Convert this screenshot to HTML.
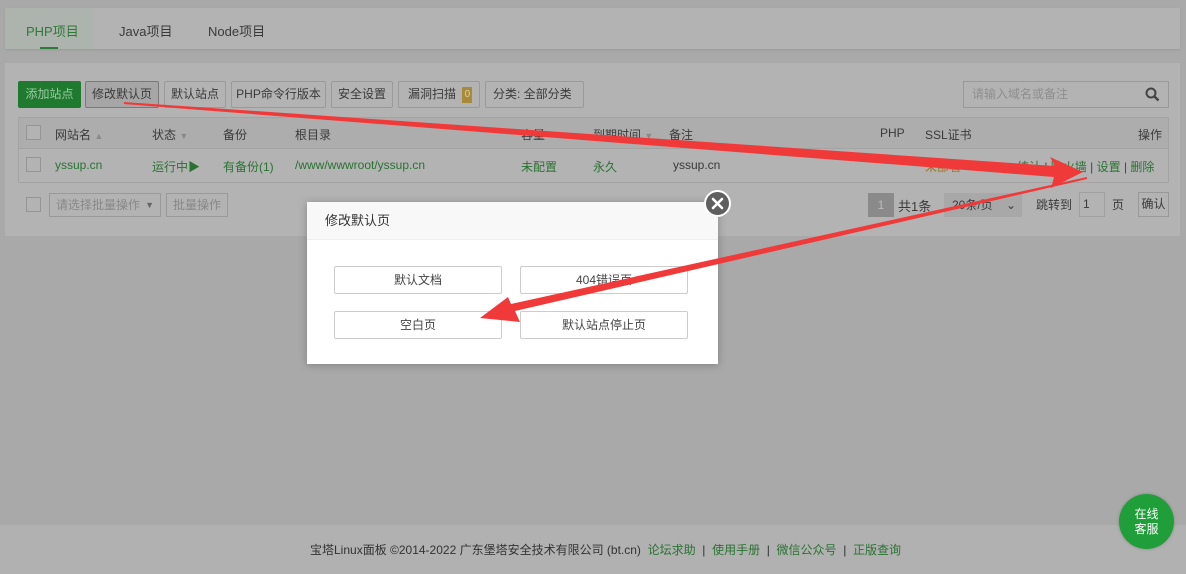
<!DOCTYPE html>
<html><head><meta charset="utf-8"><style>
*{margin:0;padding:0;box-sizing:border-box}
body{width:1186px;height:574px;background:#a9a9a9;font-family:"Liberation Sans","Noto Sans CJK SC",sans-serif;font-size:12px;color:#3a3a3a;position:relative;overflow:hidden}
.a{position:absolute}
.btn{position:absolute;top:81px;height:27px;border:1px solid #9a9a9a;background:#b3b3b3;line-height:25px;text-align:center;color:#3a3a3a;border-radius:2px}
.g{color:#2a7232}
.cb{position:absolute;width:15px;height:15px;border:1px solid #959595;background:#b3b3b3}
.db{position:absolute;width:168px;height:28px;border:1px solid #ccc;border-radius:2px;line-height:26px;text-align:center;color:#444;background:#fff}
</style></head><body>
<div class="a" style="left:5px;top:8px;width:1175px;height:41px;background:#b3b3b3;box-shadow:0 1px 2px #999"></div>
<div class="a" style="left:5px;top:8px;width:89px;height:41px;background:#adb3ad"></div>
<div class="a" style="left:26px;top:21px;font-size:13px;color:#2e7a38">PHP项目</div>
<div class="a" style="left:40px;top:47px;width:18px;height:2px;background:#2e7a38"></div>
<div class="a" style="left:119px;top:21px;font-size:13px">Java项目</div>
<div class="a" style="left:208px;top:21px;font-size:13px">Node项目</div>

<div class="a" style="left:5px;top:63px;width:1175px;height:173px;background:#b3b3b3"></div>
<div class="btn" style="left:18px;width:63px;background:#1f7a30;border-color:#1f7a30;color:#9cc9a2">添加站点</div>
<div class="btn" style="left:85px;width:74px;background:#a6a6a6;border-color:#7a7a7a">修改默认页</div>
<div class="btn" style="left:164px;width:62px">默认站点</div>
<div class="btn" style="left:231px;width:95px">PHP命令行版本</div>
<div class="btn" style="left:331px;width:62px">安全设置</div>
<div class="btn" style="left:398px;width:82px;text-align:left;padding-left:9px">漏洞扫描 <span style="display:inline-block;width:10px;height:16px;background:#a88a3a;color:#e0d0a0;font-size:10px;line-height:16px;text-align:center;vertical-align:middle;margin-left:3px">0</span></div>
<div class="btn" style="left:485px;width:99px;text-align:left;padding-left:7px">分类: 全部分类 <span style="font-size:9px">▼</span></div>
<div class="a" style="left:963px;top:81px;width:206px;height:27px;border:1px solid #999;background:#b3b3b3;color:#8e8e8e;line-height:25px;padding-left:8px">请输入域名或备注
<svg class="a" style="right:8px;top:5px" width="15" height="15" viewBox="0 0 15 15"><circle cx="6" cy="6" r="4.5" fill="none" stroke="#444" stroke-width="2"/><path d="M9.5 9.5L13.5 13.5" stroke="#444" stroke-width="2.4"/></svg></div>

<div class="a" style="left:18px;top:117px;width:1151px;height:66px;border:1px solid #a3a3a3"></div>
<div class="a" style="left:19px;top:118px;width:1149px;height:31px;background:#adadad;border-bottom:1px solid #a3a3a3"></div>
<div class="cb" style="left:26px;top:125px"></div>
<div class="cb" style="left:26px;top:157px"></div>
<div class="a" style="left:55px;top:126px">网站名 <span style="color:#8a8a8a;font-size:9px">▲</span></div>
<div class="a" style="left:152px;top:126px">状态 <span style="color:#8a8a8a;font-size:9px">▼</span></div>
<div class="a" style="left:223px;top:126px">备份</div>
<div class="a" style="left:295px;top:126px">根目录</div>
<div class="a" style="left:521px;top:126px">容量</div>
<div class="a" style="left:593px;top:126px">到期时间 <span style="color:#8a8a8a;font-size:9px">▼</span></div>
<div class="a" style="left:669px;top:126px">备注</div>
<div class="a" style="left:880px;top:126px">PHP</div>
<div class="a" style="left:925px;top:126px">SSL证书</div>
<div class="a" style="left:1138px;top:126px">操作</div>
<div class="a g" style="left:55px;top:158px">yssup.cn</div>
<div class="a g" style="left:152px;top:158px">运行中▶</div>
<div class="a g" style="left:223px;top:158px">有备份(1)</div>
<div class="a g" style="left:295px;top:158px">/www/wwwroot/yssup.cn</div>
<div class="a g" style="left:521px;top:158px">未配置</div>
<div class="a g" style="left:593px;top:158px">永久</div>
<div class="a" style="left:673px;top:158px">yssup.cn</div>
<div class="a" style="left:925px;top:158px;color:#a07020">未部署</div>
<div class="a g" style="left:1017px;top:158px">统计 <span style="color:#444">|</span> 防火墙 <span style="color:#444">|</span> 设置 <span style="color:#444">|</span> 删除</div>

<div class="cb" style="left:26px;top:197px"></div>
<div class="a" style="left:49px;top:193px;width:112px;height:24px;border:1px solid #999;color:#888;line-height:22px;padding-left:6px">请选择批量操作 <span style="position:absolute;right:6px;font-size:9px;color:#666">▼</span></div>
<div class="a" style="left:166px;top:193px;width:62px;height:24px;border:1px solid #999;color:#888;line-height:22px;text-align:center">批量操作</div>
<div class="a" style="left:868px;top:193px;width:26px;height:24px;background:#8a8a8a;color:#bbb;line-height:24px;text-align:center">1</div>
<div class="a" style="left:898px;top:196px;font-size:13px">共1条</div>
<div class="a" style="left:944px;top:193px;width:78px;height:24px;background:#a8a8a8;line-height:24px;padding-left:8px">20条/页 <span style="position:absolute;right:6px">⌄</span></div>
<div class="a" style="left:1036px;top:196px">跳转到</div>
<div class="a" style="left:1079px;top:192px;width:26px;height:25px;border:1px solid #a0a0a0;line-height:23px;padding-left:3px">1</div>
<div class="a" style="left:1112px;top:196px">页</div>
<div class="a" style="left:1138px;top:192px;width:31px;height:25px;border:1px solid #999;line-height:23px;text-align:center">确认</div>

<div class="a" style="left:0;top:525px;width:1186px;height:49px;background:#b1b1b1"></div>
<div class="a" style="left:310px;top:541px;color:#333">宝塔Linux面板 ©2014-2022 广东堡塔安全技术有限公司 (bt.cn) &nbsp;<span class="g">论坛求助</span> &nbsp;| &nbsp;<span class="g">使用手册</span> &nbsp;| &nbsp;<span class="g">微信公众号</span> &nbsp;| &nbsp;<span class="g">正版查询</span></div>
<div class="a" style="left:1119px;top:494px;width:55px;height:55px;border-radius:50%;background:#1f9e3a;color:#fff;text-align:center;line-height:15px;padding-top:13px;box-shadow:0 0 3px #888">在线<br>客服</div>

<div class="a" style="left:307px;top:202px;width:411px;height:162px;background:#fff;box-shadow:0 1px 8px rgba(0,0,0,.25)"></div>
<div class="a" style="left:307px;top:202px;width:411px;height:38px;background:#f8f8f8;border-bottom:1px solid #eee;line-height:38px;padding-left:18px;font-size:13px;color:#333">修改默认页</div>
<div class="db" style="left:334px;top:266px">默认文档</div>
<div class="db" style="left:520px;top:266px">404错误页</div>
<div class="db" style="left:334px;top:311px">空白页</div>
<div class="db" style="left:520px;top:311px">默认站点停止页</div>
<div class="a" style="left:704px;top:190px;width:27px;height:27px;border-radius:50%;background:#5f5f5f;border:2px solid #fff"></div>
<svg class="a" style="left:704px;top:190px" width="27" height="27"><path d="M9 9L18 18M18 9L9 18" stroke="#fff" stroke-width="2.6" stroke-linecap="round"/></svg>

<svg class="a" style="left:0;top:0" width="1186" height="574">
<polygon points="124,102 1055,166 1050,157 1083,172 1051,188 1054,177 124,104" fill="#f03a3a"/>
<polygon points="1087,179 515,311 520,322 480,318 508,297 511,304 1087,177" fill="#f03a3a"/>
</svg>
</body></html>
